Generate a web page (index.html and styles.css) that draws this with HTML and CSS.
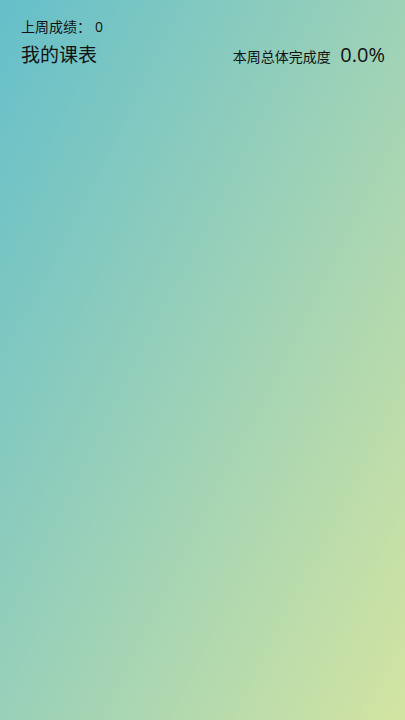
FILE: index.html
```html
<!DOCTYPE html>
<html lang="zh-CN">
  <head>
    <meta charset="UTF-8" />
    <meta name="viewport" content="width=device-width, initial-scale=1.0" />
    <title>我的课表</title>
    <link rel="stylesheet" href="styles.css">
  </head>
  <body>
    <header class="header">
      <p class="last-score">上周成绩：<span class="score">0</span></p>
      <div class="title-row">
        <h1 class="title">我的课表</h1>
        <p class="progress">本周总体完成度 <span class="percent">0.0%</span></p>
      </div>
    </header>
  </body>
</html>
```

FILE: styles.css
```css
* {
  box-sizing: border-box;
}
body {
  margin: 0;
  min-height: 100vh;
  background: linear-gradient(117deg, #65bfca 0%, #9bd1b8 50%, #d3e4a1 100%);
  color: #111;
  font-family: "Open Sans", "Noto Sans CJK SC", sans-serif;
}
.header {
  padding: 15px 20px 15px 21px;
}
.header p,
.header h1 {
  margin: 0;
  font-weight: 400;
}
.last-score {
  font-size: 14px;
  line-height: 24px;
}
.score {
  margin-left: 4px;
}
.title-row {
  display: flex;
  justify-content: space-between;
  align-items: baseline;
}
.header .title {
  font-size: 19px;
  line-height: 32px;
}
.progress {
  font-size: 14px;
  line-height: 32px;
}
.percent {
  margin-left: 6px;
  font-size: 20px;
}
```
